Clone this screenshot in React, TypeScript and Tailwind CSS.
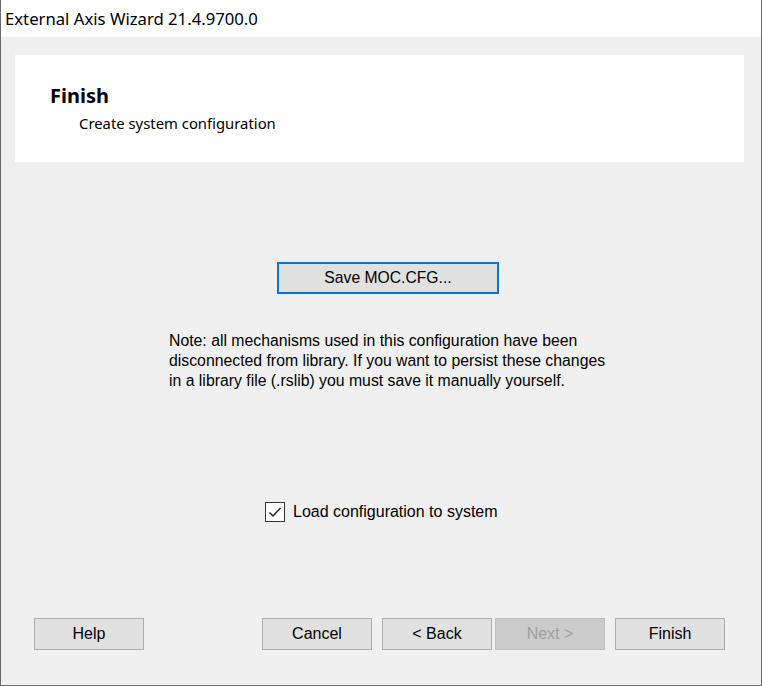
import React from "react";

const btn =
  "h-[32px] w-[110px] border border-[#adadad] bg-[#e1e1e1] text-[16px] text-black flex items-center justify-center";

export default function App() {
  return (
    <div
      className="relative w-[762px] h-[686px] flex flex-col border-l border-r border-b border-[#6b6b6b] bg-[#f0f0f0] overflow-hidden"
      style={{ fontFamily: '"Liberation Sans", Arial, sans-serif' }}
    >
      <div
        className="h-[37px] shrink-0 bg-white flex items-center pl-[4px] text-[16.7px] text-black"
        style={{ fontFamily: '"Noto Sans", "Open Sans", sans-serif' }}
      >
        External Axis Wizard 21.4.9700.0
      </div>
      <div className="flex-1 flex flex-col">
        <div
          className="mt-[18px] ml-[14px] w-[729px] h-[107px] bg-white pl-[35px] pt-[28px]"
          style={{ fontFamily: '"Noto Sans", "Open Sans", sans-serif' }}
        >
          <div className="text-[20px] font-bold leading-[26px] text-black">Finish</div>
          <div className="ml-[29px] text-[14.85px] leading-[20px] mt-[4px] text-black">
            Create system configuration
          </div>
        </div>
        <div className="mt-[100px] ml-[276px]">
          <button className="w-[222px] h-[32px] border-2 border-[#0078d7] bg-[#e1e1e1] text-[15.7px] text-black flex items-center justify-center">
            Save MOC.CFG...
          </button>
        </div>
        <div className="mt-[37px] ml-[168px] text-[15.8px] leading-[20px] text-black">
          <p>Note: all mechanisms used in this configuration have been</p>
          <p>disconnected from library. If you want to persist these changes</p>
          <p>in a library file (.rslib) you must save it manually yourself.</p>
        </div>
        <div className="mt-[109px] ml-[264px] flex items-center gap-[8px]">
          <div className="w-[20px] h-[20px] border border-[#333333] bg-white flex items-center justify-center">
            <svg width="16" height="16" viewBox="0 0 16 16">
              <path d="M2.5 8.5 L6 12 L13.5 4" fill="none" stroke="#222" strokeWidth="1.5" />
            </svg>
          </div>
          <span className="text-[16px] text-black">Load configuration to system</span>
        </div>
        <div className="mt-[94px] flex items-center">
          <div className={`ml-[33px] ${btn}`}>Help</div>
          <div className={`ml-[118px] ${btn}`}>Cancel</div>
          <div className={`ml-[10px] ${btn}`}>&lt; Back</div>
          <div className="ml-[3px] h-[32px] w-[110px] border border-[#bfbfbf] bg-[#cccccc] text-[16px] text-[#a0a0a0] flex items-center justify-center">
            Next &gt;
          </div>
          <div className={`ml-[10px] ${btn}`}>Finish</div>
        </div>
      </div>
    </div>
  );
}
